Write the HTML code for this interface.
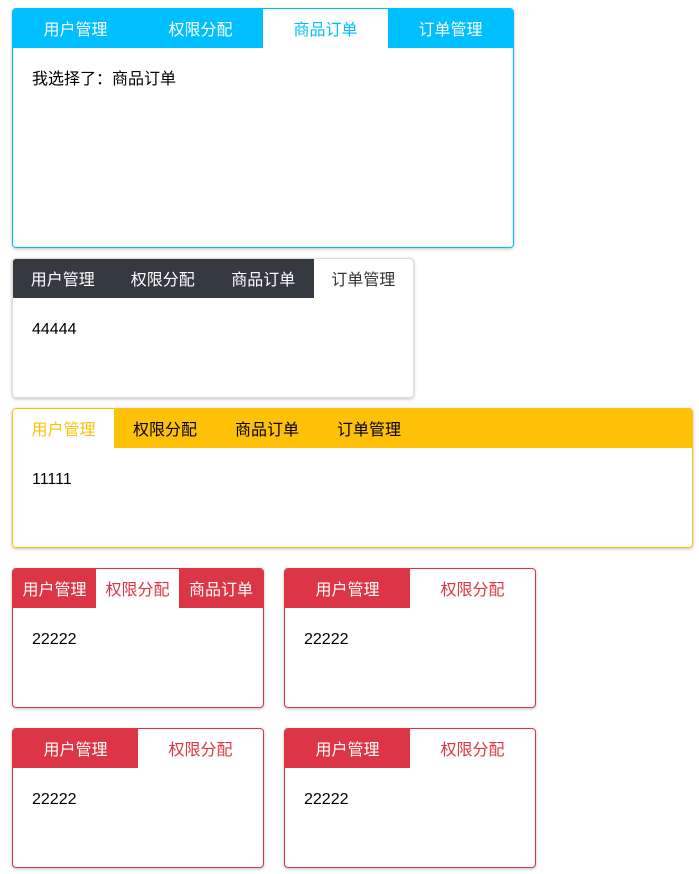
<!DOCTYPE html>
<html><head><meta charset="utf-8"><style>
body{margin:0;background:#fff;font-family:"Liberation Sans","Noto Sans CJK SC",sans-serif;font-size:16px;color:#000}
.card{position:absolute;box-sizing:border-box;border:1px solid;border-radius:4px;overflow:hidden;box-shadow:0 1px 3px rgba(0,0,0,.25)}
.bar{display:flex;height:39px}
.bar div{display:flex;align-items:center;justify-content:center;color:#fff;height:38px;padding-bottom:1px}
.c{padding:23px 19px 0}
</style></head><body>
<div class="card" style="left:12px;top:8px;width:502px;height:240px;border-color:#00bfff">
<div class="bar" style="background:#00bfff"><div style="width:125px">用户管理</div><div style="width:125px">权限分配</div><div style="width:125px;background:#fff;color:#00bfff">商品订单</div><div style="width:125px">订单管理</div></div>
<div class="c" style="padding-top:17px">我选择了：商品订单</div></div>

<div class="card" style="left:12px;top:258px;width:402px;height:140px;border-color:#ddd">
<div class="bar" style="background:#343a40"><div style="width:100px">用户管理</div><div style="width:101px">权限分配</div><div style="width:101px">商品订单</div><div style="width:100px;background:#fff;color:#333">订单管理</div></div>
<div class="c">44444</div></div>

<div class="card" style="left:12px;top:408px;width:681px;height:140px;border-color:#ffc107">
<div class="bar" style="background:#ffc107"><div style="width:101px;background:#fff;color:#ffc107">用户管理</div><div style="width:102px;color:#000">权限分配</div><div style="width:102px;color:#000">商品订单</div><div style="width:102px;color:#000">订单管理</div></div>
<div class="c">11111</div></div>

<div class="card" style="left:12px;top:568px;width:252px;height:140px;border-color:#dc3545">
<div class="bar" style="background:#dc3545"><div style="width:83px">用户管理</div><div style="width:83px;background:#fff;color:#dc3545">权限分配</div><div style="width:84px">商品订单</div></div>
<div class="c">22222</div></div>

<div class="card" style="left:284px;top:568px;width:252px;height:140px;border-color:#dc3545">
<div class="bar"><div style="width:125px;background:#dc3545">用户管理</div><div style="width:125px;color:#dc3545">权限分配</div></div>
<div class="c">22222</div></div>

<div class="card" style="left:12px;top:728px;width:252px;height:140px;border-color:#dc3545">
<div class="bar"><div style="width:125px;background:#dc3545">用户管理</div><div style="width:125px;color:#dc3545">权限分配</div></div>
<div class="c">22222</div></div>

<div class="card" style="left:284px;top:728px;width:252px;height:140px;border-color:#dc3545">
<div class="bar"><div style="width:125px;background:#dc3545">用户管理</div><div style="width:125px;color:#dc3545">权限分配</div></div>
<div class="c">22222</div></div>
</body></html>
